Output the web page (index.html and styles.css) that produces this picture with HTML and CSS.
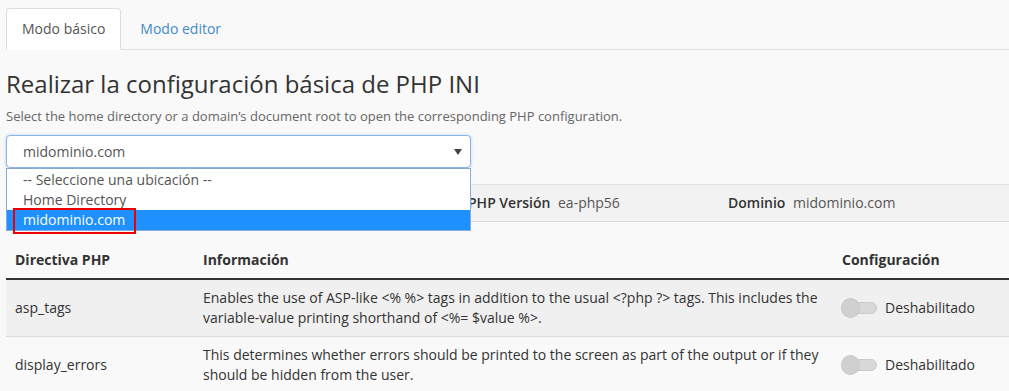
FILE: index.html
```html
<!DOCTYPE html>
<html lang="es">
<head>
    <meta charset="UTF-8">
    <title>Configuración básica de PHP INI</title>
    <link rel="stylesheet" href="styles.css">
</head>
<body>
    <div class="page">
        <ul class="tabs">
            <li class="tab active"><a href="#basic">Modo básico</a></li>
            <li class="tab"><a href="#editor">Modo editor</a></li>
        </ul>

        <h1 class="title">Realizar la configuración básica de PHP INI</h1>
        <p class="lead">Select the home directory or a domain’s document root to open the corresponding PHP configuration.</p>

        <div class="picker">
            <div class="select">
                <span>midominio.com</span>
                <span class="caret"></span>
            </div>
            <ul class="options">
                <li>-- Seleccione una ubicación --</li>
                <li>Home Directory</li>
                <li class="selected"><span class="marked">midominio.com</span></li>
            </ul>
        </div>

        <div class="info">
            <div class="info-item"></div>
            <div class="info-item"><strong>PHP Versión</strong> ea-php56</div>
            <div class="info-item"><strong>Dominio</strong> midominio.com</div>
        </div>

        <table class="directives">
            <thead>
                <tr>
                    <th class="col-name">Directiva PHP</th>
                    <th class="col-info">Información</th>
                    <th>Configuración</th>
                </tr>
            </thead>
            <tbody>
                <tr>
                    <td>asp_tags</td>
                    <td>Enables the use of ASP-like &lt;% %&gt; tags in addition to the usual &lt;?php ?&gt; tags. This includes the variable-value printing shorthand of &lt;%= $value %&gt;.</td>
                    <td><span class="switch"><span class="knob"></span></span>Deshabilitado</td>
                </tr>
                <tr>
                    <td>display_errors</td>
                    <td>This determines whether errors should be printed to the screen as part of the output or if they should be hidden from the user.</td>
                    <td><span class="switch"><span class="knob"></span></span>Deshabilitado</td>
                </tr>
            </tbody>
        </table>
    </div>
</body>
</html>
```

FILE: styles.css
```css
html, body {
    margin: 0;
    padding: 0;
    overflow: hidden;
}
body {
    font-family: "Open Sans", "DejaVu Sans", sans-serif;
    font-size: 14px;
    line-height: 20px;
    background-color: #f9f9f9;
    color: #333;
}
.page {
    padding: 8px 0 0 6px;
}
.tabs {
    list-style: none;
    margin: 0;
    padding: 0;
    display: flex;
    border-bottom: 1px solid #ddd;
}
.tab {
    margin-right: 3px;
    margin-bottom: -1px;
}
.tab a {
    display: block;
    padding: 10px 15px;
    border: 1px solid transparent;
    border-radius: 4px 4px 0 0;
    color: #428bca;
    text-decoration: none;
}
.tab.active a {
    background-color: #fff;
    border-color: #ddd;
    border-bottom-color: #fff;
    color: #555;
}
.title {
    font-size: 24px;
    font-weight: normal;
    line-height: 26px;
    margin: 21px 0 9px;
}
.lead {
    font-size: 13px;
    color: #666;
    margin: 0 0 9px;
}
.picker {
    position: relative;
    width: 465px;
}
.select {
    display: flex;
    justify-content: space-between;
    align-items: center;
    height: 31px;
    padding: 0 8px 0 16px;
    background-color: #fff;
    border: 1px solid #8cb4e6;
    border-radius: 4px;
    color: #555;
    box-shadow: 0 0 3px rgba(102, 175, 233, 0.5);
}
.caret {
    width: 0;
    height: 0;
    border-left: 4px solid transparent;
    border-right: 4px solid transparent;
    border-top: 6px solid #444;
}
.options {
    position: absolute;
    top: 33px;
    left: 0;
    right: 0;
    list-style: none;
    margin: 0;
    padding: 1px 0 0;
    background-color: #fff;
    border: 1px solid #8aa8d8;
    color: #555;
    z-index: 2;
}
.options li {
    padding: 0 0 0 16px;
    height: 20px;
}
.options .selected {
    background-color: #1e90ff;
    color: #fff;
}
.marked {
    position: relative;
}
.marked::before {
    content: "";
    position: absolute;
    left: -10px;
    right: -11px;
    top: -2px;
    bottom: -5px;
    border: 2px solid #e00;
}
.info {
    display: grid;
    grid-template-columns: 462px 260px 1fr;
    margin-top: 16px;
    padding: 8px 0;
    background-color: #f2f2f2;
    border-top: 1px solid #e3e3e3;
    border-bottom: 1px solid #ddd;
    color: #555;
}
.info strong {
    color: #333;
    font-weight: 600;
    margin-right: 4px;
}
.directives {
    width: 100%;
    margin-top: 20px;
    border-collapse: collapse;
}
.directives th {
    text-align: left;
    font-weight: bold;
    padding: 8px 9px;
    border-bottom: 2px solid #333;
}
.directives td {
    padding: 8px 9px;
    vertical-align: middle;
    border-bottom: 1px solid #ddd;
}
.directives tbody tr:nth-child(odd) {
    background-color: #f0f0f0;
}
.col-name {
    width: 170px;
}
.col-info {
    width: 621px;
}
.switch {
    display: inline-block;
    position: relative;
    vertical-align: middle;
    width: 36px;
    height: 20px;
    margin: -2px 8px 0 -1px;
}
.switch::before {
    content: "";
    position: absolute;
    left: 10px;
    right: 0;
    top: 4px;
    height: 10px;
    background-color: #d8d8d8;
    border: 1px solid #cacaca;
    border-radius: 6px;
}
.knob {
    position: absolute;
    left: 0;
    top: 0;
    width: 19px;
    height: 20px;
    border-radius: 50%;
    background-color: #d0d0d0;
    border: 1px solid #c8c8c8;
    box-sizing: border-box;
}
```
